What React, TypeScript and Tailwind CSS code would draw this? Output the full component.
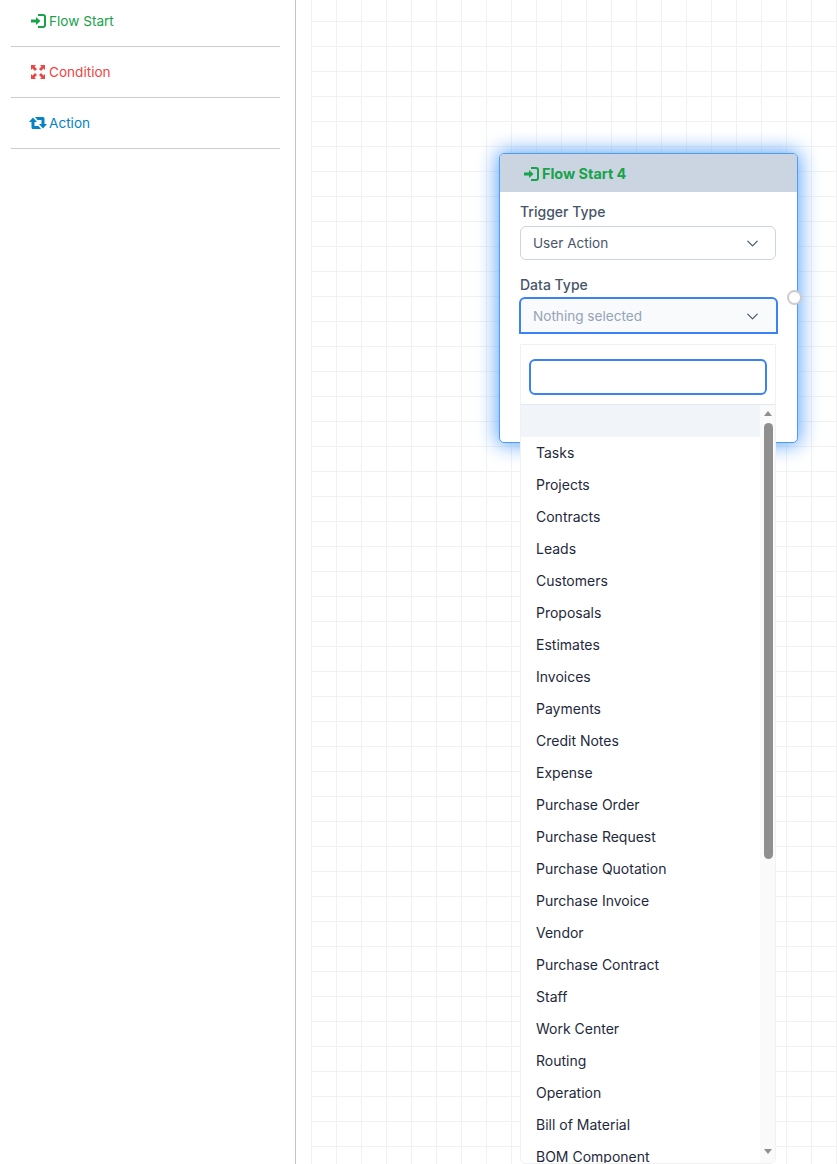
import React from 'react';
import { ChevronDown } from 'lucide-react';

const SignInIcon: React.FC = () => (
  <svg viewBox="0 0 15 14" className="h-[14px] w-[15px]" fill="currentColor">
    <path d="M0 5.5h5V3l4.5 4L5 11V8.5H0z" />
    <path d="M7 0h5a3 3 0 0 1 3 3v8a3 3 0 0 1-3 3H7v-2h5a1 1 0 0 0 1-1V3a1 1 0 0 0-1-1H7z" />
  </svg>
);

const ExpandIcon: React.FC = () => (
  <svg viewBox="0 0 14 14" className="h-[14px] w-[14px]" fill="currentColor">
    <path d="M0 0h5L3.5 1.5 6 4 4 6 1.5 3.5 0 5z" />
    <path d="M14 0H9l1.5 1.5L8 4l2 2 2.5-2.5L14 5z" />
    <path d="M0 14H5L3.5 12.5 6 10 4 8 1.5 10.5 0 9z" />
    <path d="M14 14H9l1.5-1.5L8 10l2-2 2.5 2.5L14 9z" />
  </svg>
);

const RetweetIcon: React.FC = () => (
  <svg viewBox="0 0 18 12" className="h-[12px] w-[18px]" fill="currentColor">
    <path d="M0 5 4 .5 8 5H5.5v4h4l2.5 3H4a1.5 1.5 0 0 1-1.5-1.5V5z" />
    <path d="M18 7l-4 4.5L10 7h2.5V3H8.500L6 0h8a1.500 1.500 0 0 1 1.500 1.500V7z" />
  </svg>
);

const paletteItems = [
  { label: 'Flow Start', icon: SignInIcon, color: 'text-[#16a34a]' },
  { label: 'Condition', icon: ExpandIcon, color: 'text-[#ef4444]' },
  { label: 'Action', icon: RetweetIcon, color: 'text-[#0284c7]' },
];

const dataTypes = [
  'Tasks',
  'Projects',
  'Contracts',
  'Leads',
  'Customers',
  'Proposals',
  'Estimates',
  'Invoices',
  'Payments',
  'Credit Notes',
  'Expense',
  'Purchase Order',
  'Purchase Request',
  'Purchase Quotation',
  'Purchase Invoice',
  'Vendor',
  'Purchase Contract',
  'Staff',
  'Work Center',
  'Routing',
  'Operation',
  'Bill of Material',
  'BOM Component',
];

const DataTypeDropdown: React.FC = () => (
  <div className="absolute left-[20px] top-[190px] z-20 h-[820px] w-[256px] overflow-hidden rounded-b-md border border-[#f1f1f1] bg-white">
    <div className="h-[60px] border-b border-[#e2e8f0] px-[8px] pt-[14px]">
      <div className="h-[36px] w-[238px] rounded-md border-2 border-[#3b82f6] bg-white" />
    </div>
    <div className="relative">
      <div className="h-[32px] w-[241px] bg-[#f1f5f9]" />
      {dataTypes.map(item => (
        <div key={item} className="h-[32px] pl-[15px] text-[14px] leading-[32px] text-[#1e293b]">
          {item}
        </div>
      ))}
      <div className="absolute right-0 top-0 h-full w-[15px] bg-[#fafafa]" />
      <div className="absolute right-[3px] top-[6px] h-0 w-0 border-x-[4.5px] border-b-[5px] border-x-transparent border-b-[#8f8f8f]" />
      <div className="absolute right-[2px] top-[18px] h-[436px] w-[9px] rounded-full bg-[#8f8f8f]" />
      <div className="absolute right-[3px] top-[744px] h-0 w-0 border-x-[4.5px] border-t-[5px] border-x-transparent border-t-[#8f8f8f]" />
    </div>
  </div>
);

const FlowStartNode: React.FC = () => (
  <div className="absolute left-[188px] top-[153px] h-[290px] w-[299px] rounded-[5px] border border-[#4a9dff] bg-white shadow-[0_0_20px_2px_#60a5fa]">
    <div className="flex h-[38px] items-center gap-[3px] rounded-t-[4px] bg-[#cbd5e1] pl-[24px] pt-[1px] text-[14.4px] font-bold text-[#16a34a]">
      <SignInIcon />
      <span>Flow Start 4</span>
    </div>
    <div className="px-[20px] pt-[10px]">
      <div className="h-[24px] text-[14px] font-medium leading-[20px] text-[#475569]">Trigger Type</div>
      <div className="flex h-[34px] w-[256px] items-center justify-between rounded-md border border-[#cbd5e1] bg-white pl-[12px] pr-[13px] text-[13.6px] text-[#475569]">
        <span>User Action</span>
        <ChevronDown className="h-[19px] w-[19px] text-[#475569]" strokeWidth={1.5} />
      </div>
      <div className="mt-[15px] h-[22px] text-[14px] font-medium leading-[20px] text-[#475569]">Data Type</div>
      <div className="-mx-[1.5px] flex h-[37px] w-[259px] items-center justify-between rounded-t-md border-2 border-[#3b82f6] bg-[#f8fafc] pl-[12.5px] pr-[13.5px] pt-[1px] text-[13.6px] text-[#94a3b8]">
        <span>Nothing selected</span>
        <ChevronDown className="h-[19px] w-[19px] text-[#475569]" strokeWidth={1.5} />
      </div>
    </div>
    <div className="absolute right-[-5px] top-[136px] h-[15px] w-[15px] rounded-full border-2 border-[#cccccc] bg-white" />
    <DataTypeDropdown />
  </div>
);

export default function App() {
  return (
    <div
      className="flex h-[1164px] w-[837px] overflow-hidden bg-white text-[14px]"
      style={{ fontFamily: 'Inter, "Noto Sans", sans-serif' }}
    >
      <aside className="h-full w-[296px] shrink-0 border-r border-[#c4c4c4] pl-[11px] pr-[15px]">
        <div className="-mt-[4px]">
          {paletteItems.map(item => {
            const Icon = item.icon;
            return (
              <div
                key={item.label}
                className={`flex h-[51px] items-center gap-[2px] border-b border-[#cccccc] pl-[18px] text-[13.6px] ${item.color}`}
              >
                <div className="flex w-[18px] justify-center">
                  <Icon />
                </div>
                <span>{item.label}</span>
              </div>
            );
          })}
        </div>
      </aside>
      <main className="relative ml-[15px] flex-1 bg-[linear-gradient(#f1f1f1_1px,transparent_1px),linear-gradient(90deg,#f1f1f1_1px,transparent_1px)] bg-[size:25px_25px] bg-[position:0_21px]">
        <FlowStartNode />
      </main>
    </div>
  );
}
